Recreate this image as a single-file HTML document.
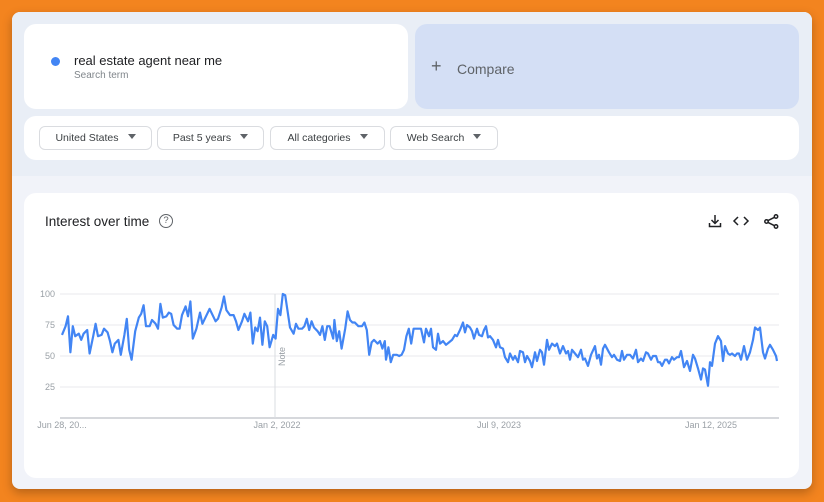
<!DOCTYPE html>
<html><head><meta charset="utf-8"><style>
*{margin:0;padding:0;box-sizing:border-box}
body{width:824px;height:502px;background:#f3841f;font-family:"Liberation Sans",Arial,sans-serif;position:relative;overflow:hidden}
.wrap{position:absolute;left:12px;top:12px;width:800px;height:477px;background:#f1f3f9;border-radius:8px;overflow:hidden;box-shadow:0 4px 10px rgba(0,0,0,.25)}
.top{position:absolute;left:0;top:0;width:800px;height:164px;background:#e9eef6}
.box{position:absolute;border-radius:12px}
.sel{position:absolute;top:10px;height:24px;border:1px solid #dadce0;border-radius:6px;font-size:10.5px;color:#3c4043;line-height:22px;text-align:center;background:#fff}
.sel:after{content:"";display:inline-block;margin-left:9px;vertical-align:2px;border-left:4px solid transparent;border-right:4px solid transparent;border-top:5px solid #5f6368}
</style></head><body>
<div class="wrap">
<div class="top"></div>
<div class="box" style="left:12px;top:12px;width:384px;height:85px;background:#fff">
 <div style="position:absolute;left:27px;top:33px;width:9px;height:9px;border-radius:50%;background:#4285f4"></div>
 <div style="position:absolute;left:50px;top:29px;font-size:13px;color:#202124">real estate agent near me</div>
 <div style="position:absolute;left:50px;top:46px;font-size:10px;color:#80868b">Search term</div>
</div>
<div class="box" style="left:403px;top:12px;width:384px;height:85px;background:#d4dff5">
 <div style="position:absolute;left:16px;top:34px;font-size:18px;color:#5f6368;line-height:16px">+</div>
 <div style="position:absolute;left:42px;top:49px;font-size:14px;color:#5f6368;top:49px;transform:translateY(-12px)">Compare</div>
</div>
<div class="box" style="left:12px;top:104px;width:775px;height:44px;background:#fff">
 <div class="sel" style="left:15px;width:113px">United States</div>
 <div class="sel" style="left:133px;width:107px">Past 5 years</div>
 <div class="sel" style="left:246px;width:115px">All categories</div>
 <div class="sel" style="left:366px;width:108px">Web Search</div>
</div>
<div class="box" style="left:12px;top:181px;width:775px;height:285px;background:#fff">
 <div style="position:absolute;left:21px;top:21px;font-size:13.5px;color:#202124">Interest over time</div>
 <div style="position:absolute;left:135px;top:21px;width:14px;height:14px;border:1.3px solid #5f6368;border-radius:50%;font-size:9.5px;line-height:12px;text-align:center;color:#5f6368">?</div>
 <svg style="position:absolute;left:683px;top:20px" width="80" height="16" viewBox="0 0 80 16" fill="none" stroke="#202124" stroke-width="1.5">
  <path d="M8 2v8M4.5 7l3.5 3.5L11.5 7M2.5 10v3.5h11V10"/>
  <path d="M31 4l-4 4 4 4M37 4l4 4-4 4"/>
  <circle cx="69" cy="3.5" r="1.7"/><circle cx="59.5" cy="8.5" r="1.7"/><circle cx="69" cy="13.5" r="1.7"/><path d="M61 7.6l6.5-3.3M61 9.4l6.5 3.3"/>
 </svg>
</div>
</div>
<svg style="position:absolute;left:0;top:0" width="824" height="502">
 <g stroke="#e8eaed" stroke-width="1">
  <line x1="60" y1="294" x2="779" y2="294"/><line x1="60" y1="325" x2="779" y2="325"/>
  <line x1="60" y1="356" x2="779" y2="356"/><line x1="60" y1="387" x2="779" y2="387"/>
 </g>
 <line x1="60" y1="418" x2="779" y2="418" stroke="#bdc1c6" stroke-width="1.3"/>
 <line x1="275" y1="294" x2="275" y2="418" stroke="#dadce0" stroke-width="1"/>
 <text x="285" y="366" font-size="9" fill="#9aa0a6" transform="rotate(-90 285 366)" font-family="Liberation Sans,sans-serif">Note</text>
 <g font-size="9" fill="#9aa0a6" font-family="Liberation Sans,sans-serif" text-anchor="end">
  <text x="55" y="297">100</text><text x="55" y="328">75</text><text x="55" y="359">50</text><text x="55" y="390">25</text>
 </g>
 <g font-size="9" fill="#9aa0a6" font-family="Liberation Sans,sans-serif" text-anchor="middle">
  <text x="62" y="428">Jun 28, 20...</text><text x="277" y="428">Jan 2, 2022</text><text x="499" y="428">Jul 9, 2023</text><text x="711" y="428">Jan 12, 2025</text>
 </g>
 <polyline id="ln" fill="none" stroke="#4285f4" stroke-width="2.2" stroke-linejoin="round"/>
</svg>
<script>
var d=[62,67,65,74,67,82,69,53,71,74,73,66,76,68,78,63,80,68,83,71,85,52,88,66,90,76,92,66,95,67,97,72,100,69,102,62,104,53,106,60,109,63,111,51,114,67,116,80,118,55,120,47,123,70,126,81,128,84,130,91,132,74,135,74,137,79,140,76,142,72,144,92,146,81,149,82,151,85,153,84,155,75,158,72,160,72,162,83,165,90,167,82,169,94,171,64,174,72,177,85,179,76,182,82,185,88,188,82,190,78,192,80,195,89,197,98,199,87,202,83,205,83,207,78,209,71,212,78,214,84,217,78,219,85,221,60,223,73,225,70,227,81,229,59,231,78,233,74,235,57,238,67,240,64,242,88,244,83,246,100,248,99,250,86,252,73,255,68,257,76,259,72,262,72,264,74,266,80,268,71,270,78,272,73,275,70,277,67,279,74,281,63,283,74,285,74,288,64,289,79,291,62,293,70,295,56,298,72,300,86,302,79,304,77,306,77,309,74,312,74,314,77,316,71,318,51,320,61,322,63,325,60,327,62,329,56,331,62,332,47,334,57,336,45,338,51,341,51,343,50,345,51,347,55,349,66,351,72,353,60,355,72,421,72,424,61,426,72,429,66,431,72,433,57,436,55,438,68,440,60,443,62,446,59,449,61,452,63,455,67,457,66,460,71,463,77,465,69,467,75,470,73,472,70,474,64,477,72,479,67,482,66,484,71,486,74,488,65,490,66,493,63,496,57,498,63,500,57,503,56,505,49,508,45,510,52,513,47,515,50,518,45,520,54,523,53,525,45,527,50,530,46,532,41,535,53,537,46,540,55,542,53,544,43,547,63,549,55,552,60,555,58,557,60,560,52,563,58,566,52,568,54,570,47,572,55,575,52,578,49,581,55,583,47,585,48,588,42,591,51,595,58,597,48,599,51,601,43,603,56,605,59,609,53,612,49,614,51,617,47,620,46,622,54,624,47,627,51,630,51,633,48,636,55,638,45,641,48,643,46,646,53,648,52,651,47,653,50,656,50,658,45,660,45,662,42,665,47,667,47,669,44,672,49,674,47,677,49,679,49,681,54,684,41,687,46,690,38,693,51,695,48,698,40,701,31,703,40,705,39,708,26,710,45,712,42,715,60,718,66,721,62,723,46,725,58,728,52,730,51,732,52,735,50,737,52,739,52,741,47,744,58,747,47,750,53,753,63,755,73,758,71,760,73,763,53,765,48,768,56,770,59,773,55,776,50,777,46];
var p=[];for(var i=0;i<d.length;i+=2){var x=d[i];if(x<=355)x=62+(x-62)*1.2;p.push(x.toFixed(1)+","+(418-d[i+1]*1.24).toFixed(1));}
document.getElementById("ln").setAttribute("points",p.join(" "));
</script>
</body></html>
